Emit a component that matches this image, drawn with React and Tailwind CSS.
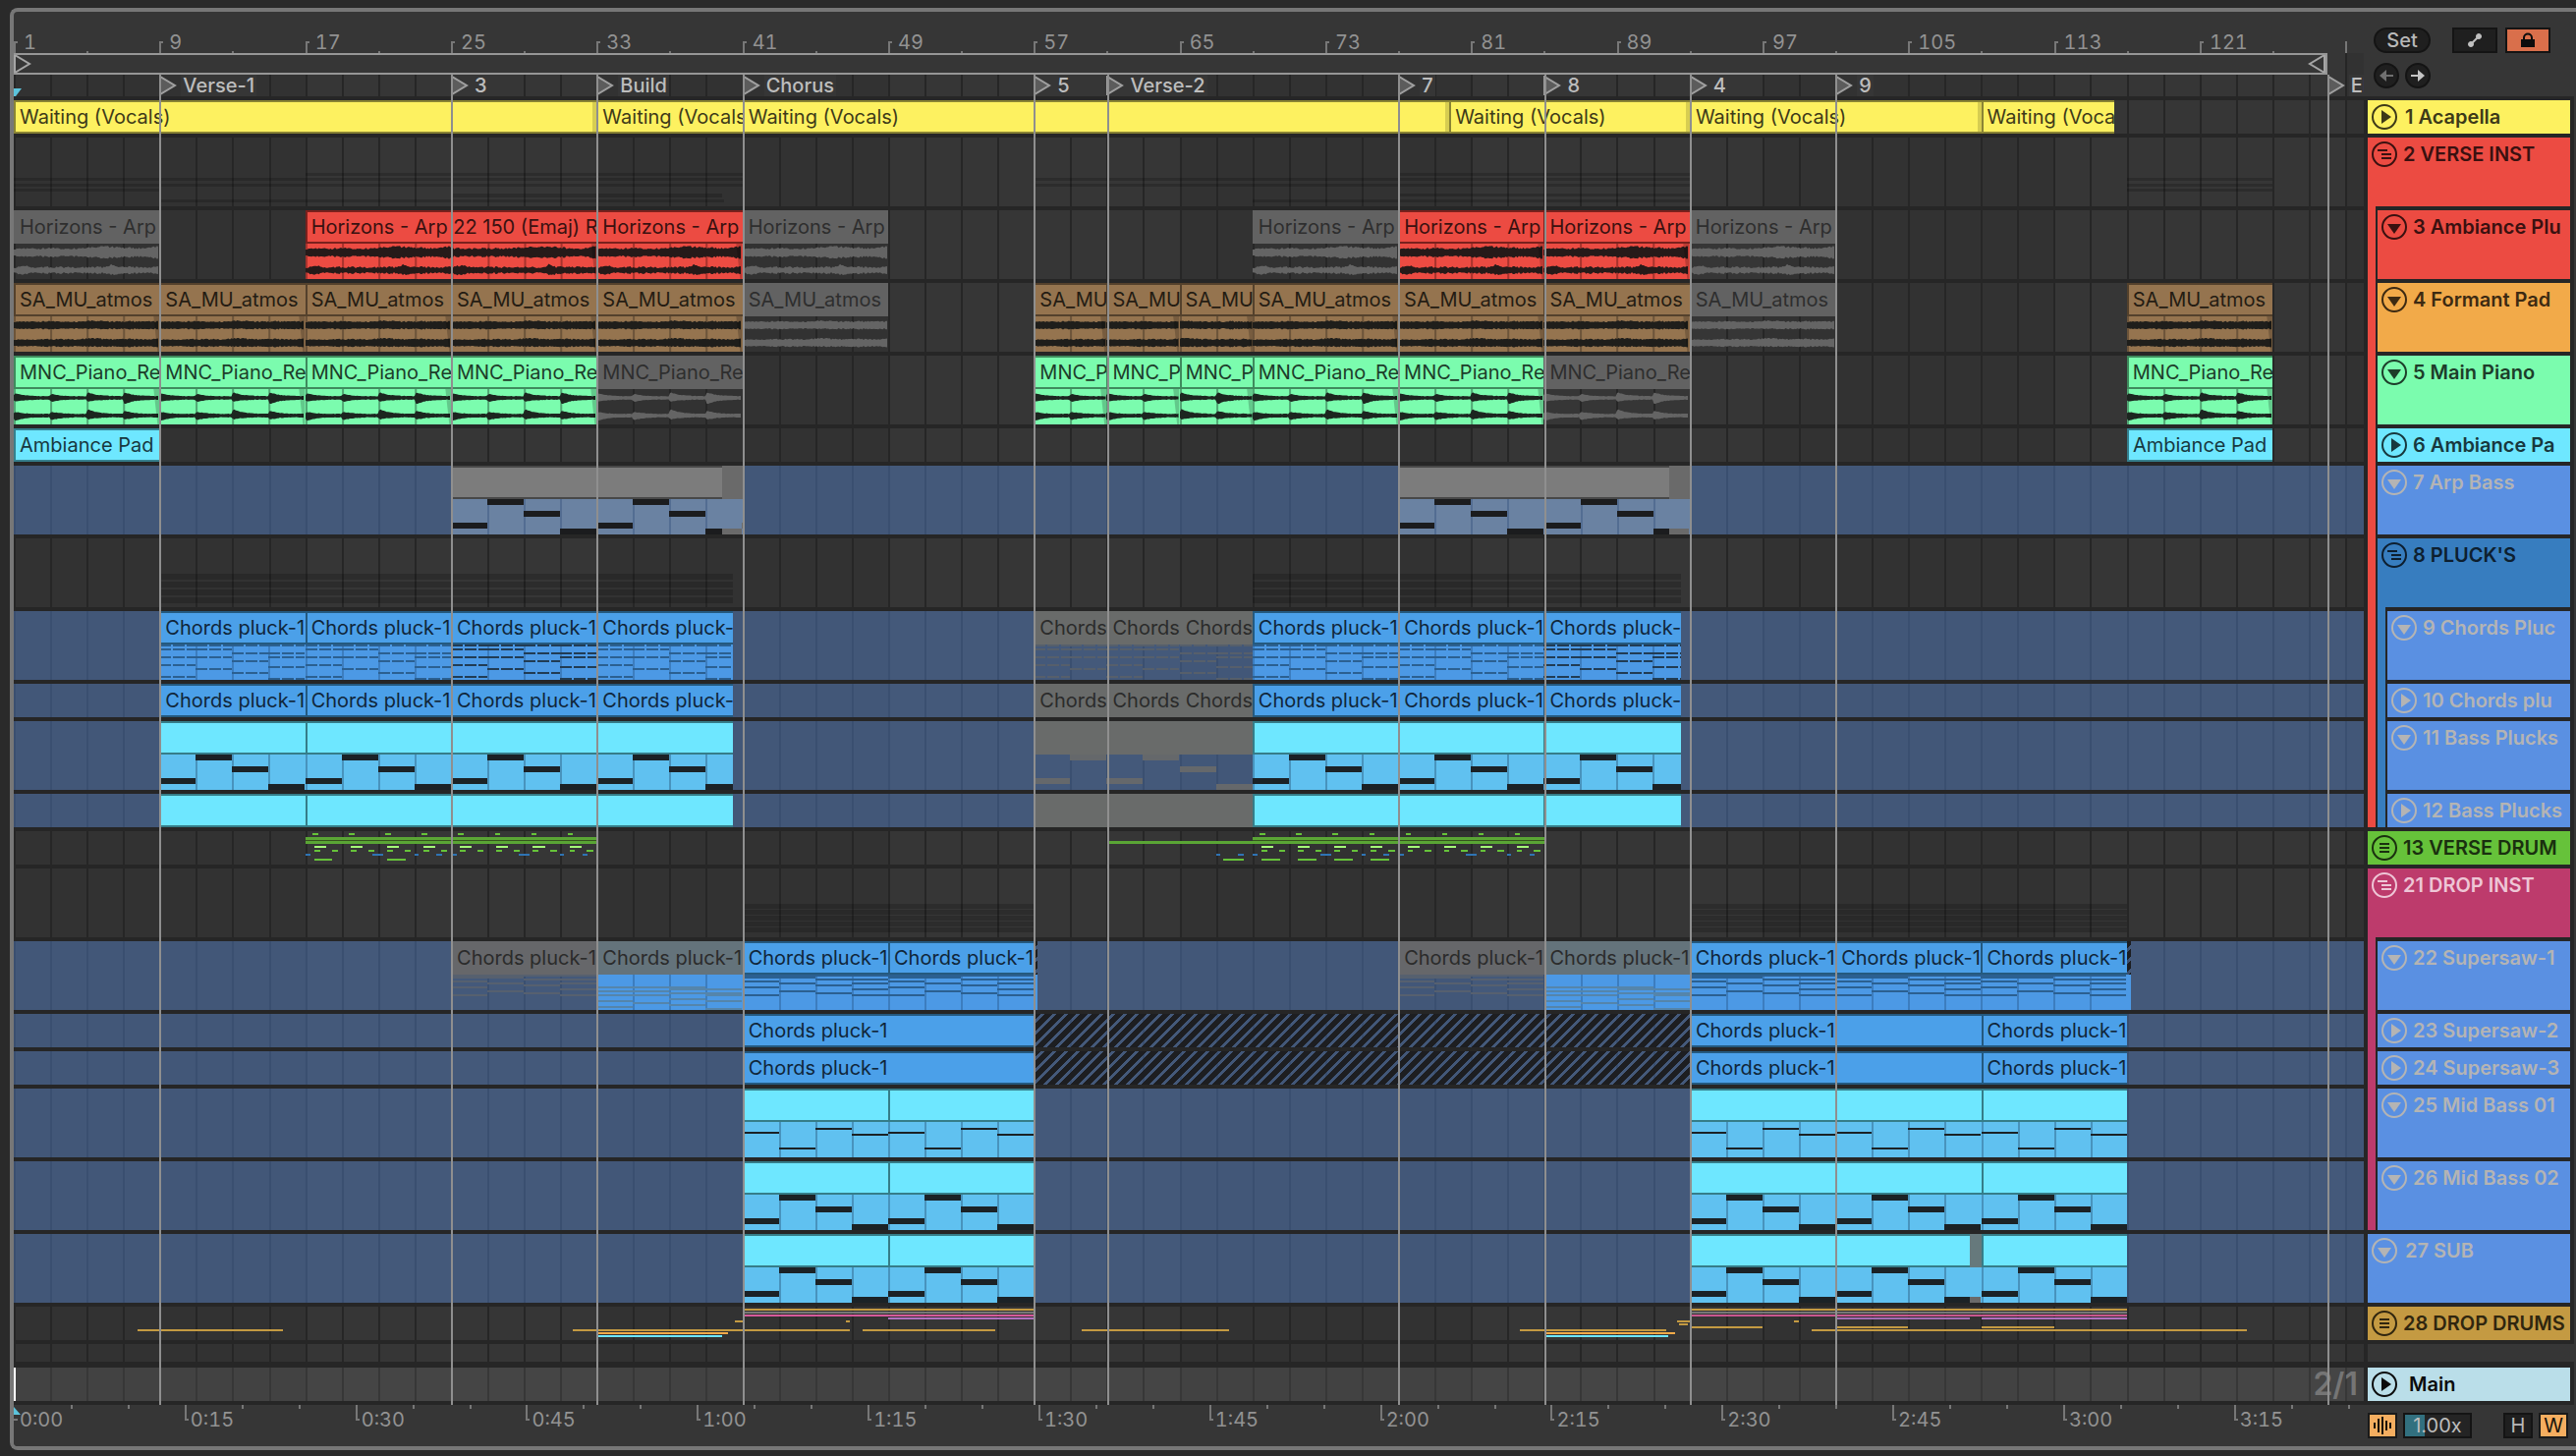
import React from "react";

const TOTAL = 129; // bars visible in the arrangement
const BAR = 18.54; // drawing units per bar inside clip bodies

const span = (bars) => `${(bars / TOTAL) * 100}%`;

const skins = {
  yellow: { head: "bg-[#fdf160] border-[#8a8434] text-[#3d3a18]", fade: true },
  red: { head: "bg-[#ec4b42] border-[#7a211d] text-[#3a1110]", body: "bg-[#ec4b42]", line: "#a8332d", ink: "#261a19" },
  brown: { head: "bg-[#95744f] border-[#54412c] text-[#241c13]", body: "bg-[#95744f]", line: "#6c543a", ink: "#1f1e1b" },
  green: { head: "bg-[#7bfcae] border-[#3f8a5d] text-[#1d3d2a]", body: "bg-[#7bfcae]", line: "#52a875", ink: "#1c2620" },
  cyan: { head: "bg-[#6ee7ff] border-[#35808e] text-[#17383e]" },
  blue: { head: "bg-[#4ba0e9] border-[#24597f] text-[#10263a]", body: "bg-[#4c99e5]", line: "#3c7dbf", ink: "#2b6091" },
  blueDark: { head: "bg-[#4ba0e9] border-[#24597f] text-[#10263a]", body: "bg-[#4c99e5]", line: "#3c7dbf", ink: "#213c54" },
  aqua: { head: "bg-[#6ee7ff] border-[#357d89] text-[#17383e]", body: "bg-[#60c1f0]", line: "#4893bd", ink: "#1b2226" },
  aquaEnd: { head: "bg-[#66797c] border-[#66797c]", body: "bg-[#60c1f0]", ink: "#6a6a6a" },
  arp: { head: "bg-[#7c7c7c] border-[#484848]", body: "bg-[#6a82a2]", line: "#536d92", ink: "#1b1c1e" },
  arpEnd: { head: "bg-[#6a6a6a] border-[#6a6a6a]", body: "bg-[#6a82a2]", ink: "#6a6a6a" },
  off: { head: "bg-[#626262] border-[#626262] text-[#2e2e2e]", body: "bg-transparent", ink: "#646464" },
  offPluck: { head: "bg-[#696b6a] border-[#696b6a] text-[#2b2b2b]", body: "bg-transparent", ink: "#565f6b" },
  offBass: { head: "bg-[#696b6a] border-[#696b6a]", body: "bg-transparent", ink: "#65686b" },
  offSaw: { head: "bg-[#66676a] border-[#66676a] text-[#2b2b2b]", body: "bg-transparent", ink: "#56606f" },
  offSawBlue: { head: "bg-[#64737b] border-[#64737b] text-[#2b2b2b]", body: "bg-[#4c99e5]", line: "#3c7dbf", ink: "#5585ab" },
  hatch: {
    head: "border-transparent bg-[linear-gradient(135deg,#1d1e21_30%,transparent_30%,transparent_50%,#1d1e21_50%,#1d1e21_80%,transparent_80%)] bg-[length:12px_12px] bg-origin-border",
    body: "bg-[#4c99e5]",
  },
};

// notes: [cell, y, height], a cell is two bars and the pattern loops every four cells
const patterns = {
  bass: [[0, 24, 6], [1, 0, 6], [2, 12, 6], [3, 30, 6]],
  mid: [[0, 10, 2], [1, 26, 2], [2, 6, 2], [3, 12, 2]],
  pluck: [
    [0, 0, 2], [0, 4, 2], [0, 12, 2], [0, 20, 2], [0, 32, 2],
    [1, 0, 2], [1, 4, 2], [1, 12, 2], [1, 24, 2],
    [2, 0, 2], [2, 8, 2], [2, 16, 2], [2, 28, 2],
    [3, 0, 2], [3, 8, 2], [3, 12, 2], [3, 22, 2], [3, 34, 2],
  ],
  saw: [
    [0, 0, 4], [0, 6, 2], [0, 12, 2], [0, 20, 2],
    [1, 0, 4], [1, 8, 2], [1, 16, 2],
    [2, 0, 2], [2, 4, 2], [2, 10, 2], [2, 18, 2],
    [3, 0, 2], [3, 4, 2], [3, 8, 2], [3, 14, 2], [3, 20, 2],
  ],
  sawLow: [
    [0, 12, 2], [0, 16, 2], [0, 20, 2], [0, 26, 2], [0, 32, 2],
    [1, 12, 2], [1, 16, 2], [1, 20, 2], [1, 28, 2],
    [2, 12, 4], [2, 18, 2], [2, 24, 2], [2, 30, 2],
    [3, 14, 2], [3, 18, 4], [3, 26, 2], [3, 34, 2],
  ],
};

const noise = (n) => {
  const v = Math.sin(n * 12.9898) * 43758.5453;
  return v - Math.floor(v);
};

const bump = (t, at, width) => Math.max(0, 1 - Math.abs(t - at) / width);

const burst = (t, hits) => {
  const cell = Math.floor(t / 2);
  const age = t - cell * 2;
  return 1.4 + (hits[cell % 4] - 1.4) * Math.exp(-age * 2) * Math.min(1, age * 8 + 0.4);
};

// amplitude above and below the centre line, t in bars
const waves = {
  horizons: (t, ch, n) =>
    ch === 0
      ? [3 + bump(t, 5, 1.8) * 2 + bump(t, 7.8, 0.5) * 2 + n * 2, 3 + bump(t, 5, 1.8) * 1.5 + bump(t, 7.8, 0.4) * 2 + n * 2]
      : [2 + bump(t, 5.4, 0.3) * 3 + bump(t, 0.6, 0.5) * 2 + n * 2, 2 + bump(t, 5.5, 0.4) * 2 + bump(t, 0.5, 0.5) * 2 + n * 2],
  atmos: (t, ch, n) => [3 + bump(t, 4.3, 0.8) + n * 1.4, 3 + n * 1.4],
  piano: (t, ch, n) =>
    ch === 0
      ? [burst(t, [5, 4, 6, 6]) + n * 0.6, burst(t, [4, 4, 4, 7]) + n * 0.6]
      : [burst(t, [4, 4, 7, 5]) + n * 0.6, burst(t, [6, 5, 4, 4]) + n * 0.6],
};

const wavePath = (shape, bars, offset, ch) => {
  const mid = ch === 0 ? 9 : 27;
  const top = [];
  const bottom = [];
  for (let x = 0; x <= bars * BAR; x += 1.5) {
    const t = (x / BAR + offset) % 8;
    const n = noise(Math.round(x) + ch * 61 + offset * 17);
    const [up, down] = waves[shape](t, ch, n);
    top.push(`${x.toFixed(1)},${(mid - up).toFixed(1)}`);
    bottom.unshift(`${x.toFixed(1)},${(mid + down).toFixed(1)}`);
  }
  return `M${top.join("L")}L${bottom.join("L")}Z`;
};

const ClipBody = ({ skin, shape, bars, offset }) => {
  const first = Math.floor(offset / 2) * 2;
  const cells = [];
  for (let b = first; b < offset + bars; b += 2) cells.push(b);
  const w = bars * BAR;
  return (
    <svg
      className={`block h-9 w-full ${skin.body}`}
      viewBox={`0 0 ${w} 36`}
      preserveAspectRatio="none"
      shapeRendering={waves[shape] ? "auto" : "crispEdges"}
    >
      {skin.line && cells.map((b) => (
        <rect key={b} x={(b - offset) * BAR} y="0" width="2" height="36" fill={skin.line} />
      ))}
      {patterns[shape] && cells.map((b) =>
        patterns[shape]
          .filter(([cell]) => cell === (b / 2) % 4)
          .map(([cell, y, h]) => (
            <line
              key={`${b}-${y}`}
              x1={(b - offset) * BAR}
              x2={(b - offset + 2) * BAR}
              y1={y + h / 2}
              y2={y + h / 2}
              stroke={skin.ink}
              strokeWidth={h}
              strokeDasharray={shape === "pluck" ? "12 2" : undefined}
            />
          ))
      )}
      {waves[shape] && [0, 1].map((ch) => (
        <path key={ch} d={wavePath(shape, bars, offset, ch)} fill={skin.ink} />
      ))}
      {waves[shape] && skin.line && (
        <polygon points={`${w},0 ${w},36 ${w - 2},36 ${w - 6},0`} fill="#000" opacity="0.2" />
      )}
    </svg>
  );
};

const Clip = ({ start, end, prev, skin, text, shape, offset = 0 }) => {
  const s = skins[skin];
  return (
    <div
      className="shrink-0 overflow-hidden"
      style={{ marginLeft: span(start - prev), width: span(end - start) }}
    >
      <div className={`flex h-[34px] overflow-hidden border-2 border-r-0 whitespace-nowrap ${s.head}`}>
        {text && <span className="pl-1 leading-[30px]">{text}</span>}
        {s.fade && <span className="ml-auto w-1 shrink-0 bg-black/15" />}
      </div>
      {shape && s.body && <ClipBody skin={s} shape={shape} bars={end - start} offset={offset} />}
    </div>
  );
};

// [start, end, y, height, colour]
const Overview = ({ bars, height }) => (
  <svg className="block h-full w-full" viewBox={`0 0 ${TOTAL} ${height}`} preserveAspectRatio="none" shapeRendering="crispEdges">
    {bars.map(([s, e, y, h, color], i) => (
      <rect key={i} x={s - 1} y={y} width={e - s} height={h} fill={color} />
    ))}
  </svg>
);

const Lane = ({ tall, tint, shape, clips = [], overview }) => (
  <div className="border-b-4 border-[#262626]">
    <div className={`flex overflow-hidden ${tall ? "h-[70px]" : "h-[34px]"} ${tint ? "bg-[#5a8fe0]/40" : ""}`}>
      {overview && <Overview bars={overview} height={tall ? 70 : 34} />}
      {clips.map(([start, end, skin, text, offset, ownShape], i) => (
        <Clip
          key={start}
          start={start}
          end={end}
          prev={i ? clips[i - 1][1] : 1}
          skin={skin}
          text={text}
          offset={offset}
          shape={tall ? ownShape || shape : null}
        />
      ))}
    </div>
  </div>
);

const shade = (s, e, rows, h) => rows.map((y) => [s, e, y, h, "rgba(0,0,0,0.17)"]);

const verseShade = [
  ...shade(1, 41, [41, 47], 3),
  ...shade(1, 9, [52], 3),
  ...shade(9, 40, [63], 3),
  ...shade(17, 41, [36], 3),
  ...shade(25, 39.9, [57], 4),
  ...shade(57, 93, [41, 47], 3),
  ...shade(69, 93, [63], 3),
  ...shade(77, 93, [36, 57], 3),
  ...shade(117, 125, [41, 47, 52], 3),
];

const pluckShade = [...shade(9, 40.5, [36, 44, 52, 60], 6), ...shade(69, 92.5, [36, 44, 52, 60], 6)];
const dropShade = [...shade(41, 57, [36, 42, 48, 54, 60], 5), ...shade(93, 117, [36, 42, 48, 54, 60], 5)];

const drumLoop = (s, e, low) => {
  const out = [
    [s, e, 6, 3, "#5aa535"], [s, e, 9, 1, "#36521f"], [s, e, 10, 3, "#5aa535"],
  ];
  for (let b = s; b < e; b += 2) {
    out.push([b + 0.4, b + 0.7, 2, 2, "#66c23a"]);
    out.push([b + 0.5, b + 1.15, 15, 2, "#a5fb78"]);
    out.push([b + 0.5, b + 0.8, 19, 2, "#66c23a"], [b + 1.45, b + 1.8, 19, 2, "#66c23a"]);
    if (low(b)) out.push([b + 0.5, b + 1.5, 28, 2, "#66c23a"]);
  }
  for (let b = s; b < e; b += 8) {
    out.push([b, b + 0.3, 23, 2, "#2f74b4"], [b + 3.7, b + 4.3, 23, 2, "#2f74b4"]);
    out.push([b + 6, b + 6.2, 23, 2, "#2f74b4"], [b + 7.2, b + 7.5, 23, 2, "#2f74b4"]);
  }
  return out;
};

const verseDrums = [
  ...drumLoop(17, 33, (b) => b === 17 || b === 21),
  [61, 69, 10, 3, "#5aa535"],
  [67, 67.2, 23, 2, "#2f74b4"],
  [68.2, 68.5, 23, 2, "#2f74b4"],
  [67.4, 68.5, 28, 2, "#66c23a"],
  ...drumLoop(69, 85, (b) => b < 77),
];

const gold = "#c49a42";
const dropDrums = [
  [41, 57, 2, 2, gold], [41, 57, 5, 2, "#777777"], [41, 57, 8, 2, "#d65a9b"], [49, 57, 11, 2, "#b070c0"],
  [93, 117, 2, 2, gold], [93, 117, 5, 2, "#777777"], [93, 117, 8, 2, "#c9578f"],
  [101, 108.4, 11, 2, "#a36cb5"], [109, 117, 11, 2, "#b070c0"],
  [40.6, 41, 14, 2, gold], [46.7, 46.9, 14, 2, gold], [92.3, 93, 14, 2, gold], [98.7, 99, 14, 2, gold],
  [92.4, 92.9, 17, 2, gold],
  [93, 97, 20, 2, gold], [101, 105, 20, 2, gold], [109, 113, 20, 2, gold],
  [7.8, 15.8, 23, 2, gold], [31.7, 46.9, 23, 2, gold], [47.6, 54.9, 23, 2, gold], [59.6, 67.7, 23, 2, gold],
  [83.7, 91.7, 23, 2, gold], [99.7, 123.6, 23, 2, gold],
  [33, 40.2, 26, 2, "#f2aa49"], [33, 39.9, 29, 2, "#6ee7ff"],
  [85, 92.2, 26, 2, "#f2aa49"], [85, 91.8, 29, 2, "#6ee7ff"],
];

const waiting = "Waiting (Vocals)";
const horizons = "Horizons - Arp";
const atmos = "SA_MU_atmos";
const piano = "MNC_Piano_Re";
const pluck = "Chords pluck-1";

const pluckClips = [
  [9, 17, "blue", pluck], [17, 25, "blue", pluck], [25, 33, "blueDark", pluck], [33, 40.5, "blue", pluck],
  [57, 61, "offPluck", "Chords"], [61, 65, "offPluck", "Chords"], [65, 69, "offPluck", "Chords", 4],
  [69, 77, "blue", pluck], [77, 85, "blue", pluck], [85, 92.5, "blueDark", pluck],
];

const bassClips = [
  [9, 17, "aqua"], [17, 25, "aqua"], [25, 33, "aqua"], [33, 40.5, "aqua"],
  [57, 61, "offBass"], [61, 65, "offBass"], [65, 69, "offBass", "", 4],
  [69, 77, "aqua"], [77, 85, "aqua"], [85, 92.5, "aqua"],
];

const sawLong = [
  [41, 57, "blue", pluck], [57, 93, "hatch"], [93, 109, "blue", pluck], [109, 117, "blue", pluck],
];

const dropBass = [
  [41, 49, "aqua"], [49, 57, "aqua"], [93, 101, "aqua"], [101, 109, "aqua"], [109, 117, "aqua"],
];

const lanes = [
  {
    clips: [
      [1, 33, "yellow", waiting], [33, 41, "yellow", waiting], [41, 79.8, "yellow", waiting],
      [79.8, 93, "yellow", waiting], [93, 109, "yellow", waiting], [109, 116.3, "yellow", waiting],
    ],
  },
  { tall: true, overview: verseShade },
  {
    tall: true,
    shape: "horizons",
    clips: [
      [1, 9, "off", horizons], [17, 33, "red", `${horizons} 22 150 (Emaj) R`], [33, 41, "red", horizons],
      [41, 49, "off", horizons], [69, 77, "off", horizons], [77, 85, "red", horizons],
      [85, 93, "red", horizons], [93, 101, "off", horizons],
    ],
  },
  {
    tall: true,
    shape: "atmos",
    clips: [
      [1, 9, "brown", atmos], [9, 17, "brown", atmos], [17, 25, "brown", atmos], [25, 33, "brown", atmos],
      [33, 41, "brown", atmos], [41, 49, "off", atmos], [57, 61, "brown", "SA_MU"], [61, 65, "brown", "SA_MU"],
      [65, 69, "brown", "SA_MU", 4], [69, 77, "brown", atmos], [77, 85, "brown", atmos], [85, 93, "brown", atmos],
      [93, 101, "off", atmos], [117, 125, "brown", atmos],
    ],
  },
  {
    tall: true,
    shape: "piano",
    clips: [
      [1, 9, "green", piano], [9, 17, "green", piano], [17, 25, "green", piano], [25, 33, "green", piano],
      [33, 41, "off", piano], [57, 61, "green", "MNC_P"], [61, 65, "green", "MNC_P"], [65, 69, "green", "MNC_P", 4],
      [69, 77, "green", piano], [77, 85, "green", piano], [85, 93, "off", piano], [117, 125, "green", piano],
    ],
  },
  { clips: [[1, 9, "cyan", "Ambiance Pad"], [117, 125, "cyan", "Ambiance Pad"]] },
  {
    tall: true,
    tint: true,
    shape: "bass",
    clips: [
      [25, 33, "arp"], [33, 39.9, "arp"], [39.9, 41, "arpEnd", "", 6.9],
      [77, 85, "arp"], [85, 91.9, "arp"], [91.9, 93, "arpEnd", "", 6.9],
    ],
  },
  { tall: true, overview: pluckShade },
  { tall: true, tint: true, shape: "pluck", clips: pluckClips },
  { tint: true, clips: pluckClips },
  { tall: true, tint: true, shape: "bass", clips: bassClips },
  { tint: true, clips: bassClips },
  { overview: verseDrums },
  { tall: true, overview: dropShade },
  {
    tall: true,
    tint: true,
    shape: "saw",
    clips: [
      [25, 33, "offSaw", pluck], [33, 41, "offSawBlue", pluck, 0, "sawLow"],
      [41, 49, "blue", pluck], [49, 57, "blue", pluck], [57, 57.2, "hatch"],
      [77, 85, "offSaw", pluck], [85, 93, "offSawBlue", pluck, 0, "sawLow"],
      [93, 101, "blue", pluck], [101, 109, "blue", pluck], [109, 117, "blue", pluck], [117, 117.2, "hatch"],
    ],
  },
  { tint: true, clips: sawLong },
  { tint: true, clips: sawLong },
  { tall: true, tint: true, shape: "mid", clips: dropBass },
  { tall: true, tint: true, shape: "bass", clips: dropBass },
  {
    tall: true,
    tint: true,
    shape: "bass",
    clips: [
      [41, 49, "aqua"], [49, 57, "aqua"], [93, 101, "aqua"], [101, 108.4, "aqua"],
      [108.4, 109, "aquaEnd", "", 7.4], [109, 117, "aqua"],
    ],
  },
  { overview: dropDrums },
];

const locators = [
  [9, "Verse-1"], [25, "3"], [33, "Build"], [41, "Chorus"], [57, "5"], [61, "Verse-2"],
  [77, "7"], [85, "8"], [93, "4"], [101, "9"], [128, "END"],
];

const BarRuler = () => (
  <div className="flex h-[42px] items-end overflow-hidden text-[#929292] tabular-nums">
    {Array.from({ length: 16 }, (_, i) => i * 8 + 1).map((bar) => (
      <div key={bar} className="flex shrink-0 items-end" style={{ width: span(8) }}>
        <div className="flex w-1/2 items-end gap-1.5">
          <span className="h-3 w-1 shrink-0 border-t-2 border-l-2 border-[#777777]" />
          <span className="leading-[22px]">{bar}</span>
        </div>
        <span className="h-0.5 w-0.5 bg-[#777777]" />
      </div>
    ))}
    <span className="h-3 w-0.5 bg-[#777777]" />
  </div>
);

const LoopBar = () => (
  <div className="flex h-[22px]">
    <div className="flex justify-between border-2 border-l-0 border-[#969696]" style={{ width: span(127) }}>
      <svg className="h-[18px] w-[18px]" viewBox="0 0 18 18" fill="none" stroke="#a5a5a5" strokeWidth="2">
        <path d="M1 0v18L16 9z" />
      </svg>
      <svg className="h-[18px] w-[18px]" viewBox="0 0 18 18" fill="none" stroke="#a5a5a5" strokeWidth="2">
        <path d="M17 0v18L2 9z" />
      </svg>
    </div>
    <div className="ml-auto border-l-2 border-[#262626] bg-[#323232]" style={{ width: span(1) }} />
  </div>
);

const LocatorRow = () => (
  <div className="border-b-4 border-[#262626]">
    <div className="flex h-[22px] overflow-hidden">
      <div className="flex shrink-0 items-end" style={{ width: span(8) }}>
        <svg className="h-2 w-2" viewBox="0 0 8 8"><path d="M0 0h8L2 8H0z" fill="#5cc4dc" /></svg>
      </div>
      {locators.map(([bar, name], i) => (
        <a
          key={bar}
          href={`#bar-${bar}`}
          className="flex shrink-0 items-center gap-1 overflow-hidden font-medium text-[#bdbdbd]"
          style={{ width: span((locators[i + 1]?.[0] ?? 130) - bar) }}
        >
          <svg className="h-5 w-[18px] shrink-0" viewBox="0 0 18 20" fill="#5c5c5c" stroke="#a0a0a0" strokeWidth="2">
            <path d="M1 1v18L16 10z" />
          </svg>
          <span className="bg-[#363636] px-0.5 leading-[22px]">{name}</span>
        </a>
      ))}
    </div>
  </div>
);

const TimeRuler = () => (
  <div className="flex h-[42px] overflow-hidden bg-[#363636] text-[#929292]">
    {Array.from({ length: 14 }, (_, i) => i * 15).map((sec) => (
      <div key={sec} className="flex shrink-0" style={{ width: span(9.375) }}>
        <div className="flex w-1/3 shrink-0 gap-0.5">
          {sec === 0 ? (
            <svg className="h-4 w-1 shrink-0 overflow-visible" viewBox="0 0 4 16">
              <path d="M0 2L7 10H0z" fill="#5cc4dc" /><path d="M0 15h4" stroke="#777777" strokeWidth="2" />
            </svg>
          ) : (
            <span className="h-4 w-1 shrink-0 border-b-2 border-l-2 border-[#777777]" />
          )}
          <span className="mt-1 leading-[22px] tabular-nums">
            {Math.floor(sec / 60)}:{String(sec % 60).padStart(2, "0")}
          </span>
        </div>
        <span className="w-1/3"><span className="block h-1 w-0.5 bg-[#777777]" /></span>
        <span className="block h-1 w-0.5 bg-[#777777]" />
      </div>
    ))}
  </div>
);

const GridCells = () => (
  <div className="absolute inset-0 flex overflow-hidden">
    {Array.from({ length: 65 }, (_, i) => (
      <div
        key={i}
        className={`shrink-0 border-l-2 border-[#262626] ${Math.floor(i / 8) % 2 ? "bg-[#363636]" : "bg-[#323232]"}`}
        style={{ width: span(2) }}
      />
    ))}
  </div>
);

const LocatorLines = () => (
  <div className="pointer-events-none absolute inset-0">
    {locators.map(([bar]) => (
      <div key={bar} className="absolute inset-y-0 w-0.5 bg-[#8f8f8f]" style={{ left: span(bar - 1) }} />
    ))}
  </div>
);

const icons = {
  play: <path d="M10 6v14l10-7z" fill="currentColor" />,
  fold: <path d="M6 10h14l-7 10z" fill="currentColor" />,
  group: <path d="M6 9h10M10 13h10M10 17h10" stroke="currentColor" strokeWidth="2" />,
  list: <path d="M8 9h10M8 13h10M8 17h10" stroke="currentColor" strokeWidth="2" />,
};

const TrackHead = ({ name, icon, tall, color, gap = "gap-1.5" }) => (
  <div className={`flex items-start overflow-hidden p-1 pr-0 ${gap} ${tall ? "h-[70px]" : "h-[34px]"} ${color}`}>
    <button type="button" aria-label={`Toggle ${name}`} className="shrink-0">
      <svg className="block h-[26px] w-[26px]" viewBox="0 0 26 26" fill="none">
        <circle cx="13" cy="13" r="12" stroke="currentColor" strokeWidth="2" />
        {icons[icon]}
      </svg>
    </button>
    <span className="leading-[26px] font-semibold whitespace-nowrap">{name}</span>
  </div>
);

const BLUE = "bg-[#5a90e2] text-[#b4b4b4]";

const TrackGroup = ({ head, strip, children }) => (
  <div>
    {head}
    <div className={`flex ${strip}`}>
      <div className="w-2 shrink-0" />
      <div className="flex min-w-0 flex-1 flex-col gap-1 bg-[#262626] pt-1 pl-0.5">{children}</div>
    </div>
  </div>
);

const TrackList = () => (
  <div className="flex flex-col gap-1">
    <TrackHead name="1 Acapella" icon="play" gap="gap-2" color="bg-[#fdf160] text-[#3d3a18]" />
    <TrackGroup strip="bg-[#ec4b42]" head={<TrackHead name="2 VERSE INST" icon="group" tall color="bg-[#ec4b42] text-[#3a1110]" />}>
      <TrackHead name="3 Ambiance Plu" icon="fold" tall color="bg-[#ec4b42] text-[#3a1110]" />
      <TrackHead name="4 Formant Pad" icon="fold" tall color="bg-[#f2aa49] text-[#3d2a12]" />
      <TrackHead name="5 Main Piano" icon="fold" tall color="bg-[#7bfcae] text-[#1d3d2a]" />
      <TrackHead name="6 Ambiance Pa" icon="play" color="bg-[#6ee7ff] text-[#17383e]" />
      <TrackHead name="7 Arp Bass" icon="fold" tall color={BLUE} />
      <TrackGroup strip="bg-[#377dbf]" head={<TrackHead name="8 PLUCK'S" icon="group" tall color="bg-[#377dbf] text-[#0d1f30]" />}>
        <TrackHead name="9 Chords Pluc" icon="fold" tall color={BLUE} />
        <TrackHead name="10 Chords plu" icon="play" color={BLUE} />
        <TrackHead name="11 Bass Plucks" icon="fold" tall color={BLUE} />
        <TrackHead name="12 Bass Plucks" icon="play" color={BLUE} />
      </TrackGroup>
    </TrackGroup>
    <TrackHead name="13 VERSE DRUM" icon="list" color="bg-[#66c23a] text-[#1a300f]" />
    <TrackGroup strip="bg-[#bd3b6c]" head={<TrackHead name="21 DROP INST" icon="group" tall color="bg-[#bd3b6c] text-[#eec6d6]" />}>
      <TrackHead name="22 Supersaw-1" icon="fold" tall color={BLUE} />
      <TrackHead name="23 Supersaw-2" icon="play" color={BLUE} />
      <TrackHead name="24 Supersaw-3" icon="play" color={BLUE} />
      <TrackHead name="25 Mid Bass 01" icon="fold" tall color={BLUE} />
      <TrackHead name="26 Mid Bass 02" icon="fold" tall color={BLUE} />
    </TrackGroup>
    <TrackHead name="27 SUB" icon="fold" tall gap="gap-2" color={BLUE} />
    <TrackHead name="28 DROP DRUMS" icon="list" color="bg-[#c49a42] text-[#30260f]" />
  </div>
);

const TopControls = () => (
  <div className="h-[86px] pt-4 pl-2.5">
    <div className="flex items-center">
      <button type="button" className="h-[26px] w-[58px] rounded-full border-2 border-[#141414] bg-[#1f1f1f] leading-[22px] font-medium text-[#b8b8b8]">
        Set
      </button>
      <button type="button" aria-label="Automation mode" className="ml-[22px] flex h-[26px] w-[46px] items-center justify-center border-2 border-[#141414] bg-[#1f1f1f]">
        <svg className="h-4 w-4" viewBox="0 0 16 16" fill="#c0c0c0" stroke="#c0c0c0">
          <path d="M4 12L12 4" strokeWidth="2" /><circle cx="4" cy="12" r="2.5" /><circle cx="12" cy="4" r="2.5" />
        </svg>
      </button>
      <button type="button" aria-label="Lock envelopes" className="ml-2 flex h-[26px] w-[46px] items-center justify-center border-2 border-[#141414] bg-[#d96f4b]">
        <svg className="h-4 w-4" viewBox="0 0 16 16">
          <path d="M4 8V5.500a4 4 0 0 1 8 0V8" fill="none" stroke="#0c0c0c" strokeWidth="2" />
          <path d="M1 7h14v8H1z" fill="#0c0c0c" />
        </svg>
      </button>
    </div>
    <div className="mt-2.5 flex gap-1.5">
      <button type="button" aria-label="Previous locator" className="h-[26px] w-[26px] rounded-full border-2 border-[#141414] bg-[#1f1f1f] text-[#707070]">
        <svg className="block h-[22px] w-[22px]" viewBox="0 0 22 22">
          <path d="M4 11l7-6v12z" fill="currentColor" /><path d="M9 11h9" stroke="currentColor" strokeWidth="2" />
        </svg>
      </button>
      <button type="button" aria-label="Next locator" className="h-[26px] w-[26px] rounded-full border-2 border-[#141414] bg-[#1f1f1f] text-[#c4c4c4]">
        <svg className="block h-[22px] w-[22px]" viewBox="0 0 22 22">
          <path d="M18 11l-7-6v12z" fill="currentColor" /><path d="M4 11h9" stroke="currentColor" strokeWidth="2" />
        </svg>
      </button>
    </div>
  </div>
);

const BottomControls = () => (
  <div className="flex h-[42px] bg-[#363636] pt-2 pl-1">
    <button type="button" aria-label="Waveform zoom" className="flex h-[26px] w-[30px] items-center justify-center border-2 border-[#1a1a1a] bg-[#f5ae60]">
      <svg className="h-[18px] w-5" viewBox="0 0 20 18" stroke="#17120a" strokeWidth="2">
        <path d="M2 6v6M6 2v14M10 0v18M14 4v10M18 6v6" />
      </svg>
    </button>
    <input
      aria-label="Playback speed"
      defaultValue="1.00x"
      className="ml-1.5 h-[26px] w-[70px] border-2 border-[#141414] bg-[linear-gradient(90deg,#32707f_20px,#242424_20px)] text-center leading-[22px] text-[#bdbdbd]"
    />
    <button type="button" className="ml-8 h-[26px] w-[30px] border-2 border-[#141414] bg-[#1f1f1f] leading-[22px] text-[#b8b8b8]">H</button>
    <button type="button" className="ml-1.5 h-[26px] w-[30px] border-2 border-[#1a1a1a] bg-[#f5ae60] leading-[22px] text-[#17120a]">W</button>
  </div>
);

export default function App() {
  return (
    <div className="min-h-screen bg-[#2a2a2a] pt-2 pb-1.5 pl-2.5 font-[Inter,'Noto_Sans',sans-serif] text-xl">
      <div className="flex overflow-hidden rounded-l-lg border-4 border-r-0 border-[#777777] bg-[#363636]">
        <main className="min-w-0 flex-1">
          <BarRuler />
          <LoopBar />
          <div className="relative">
            <GridCells />
            <div className="relative">
              <LocatorRow />
              {lanes.map((lane, i) => <Lane key={i} {...lane} />)}
              <div className="h-6 border-b-[6px] border-[#262626]" />
              <div className="border-b-4 border-[#262626]">
                <div className="flex h-[34px] items-center justify-end border-l-2 border-white bg-white/8 pr-1.5">
                  <span className="text-[32px] leading-[34px] font-semibold text-[#757575]">2/1</span>
                </div>
              </div>
            </div>
            <LocatorLines />
          </div>
          <TimeRuler />
        </main>
        <aside className="w-[216px] shrink-0">
          <TopControls />
          <div className="border-r-2 border-[#363636] bg-[#262626] px-1 py-1">
            <TrackList />
          </div>
          <div className="border-l-4 border-[#262626]"><div className="h-[18px] bg-[#363636]" /></div>
          <div className="border-r-2 border-[#363636] bg-[#262626] px-1 pt-1.5 pb-1">
            <TrackHead name="Main" icon="play" gap="gap-3" color="bg-[#badee9] text-[#0c0c0c]" />
          </div>
          <BottomControls />
        </aside>
      </div>
    </div>
  );
}
